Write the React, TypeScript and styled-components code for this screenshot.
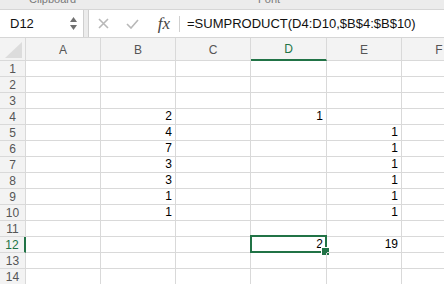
import { FC } from 'react';
import styled, { createGlobalStyle } from 'styled-components';

const GlobalStyle = createGlobalStyle`
    body {
        margin: 0;
        font-family: 'Liberation Sans', Arial, sans-serif;
        background: #ffffff;
        overflow: hidden;
    }
`;

const green = '#217346';
const gridLine = '#d9d9d9';

const Ribbon = styled.div`
    height: 9px;
    background: #ececec;
    display: flex;
    overflow: hidden;
`;

const GroupLabel = styled.span<{ $left: number }>`
    margin-left: ${(p) => p.$left}px;
    margin-top: -8px;
    font-size: 11px;
    line-height: 14px;
    color: #7a7a7a;
`;

const FormulaBar = styled.div`
    height: 27px;
    display: flex;
    background: #ececec;
    border-top: 1px solid #d6d6d6;
    border-bottom: 1px solid #d6d6d6;
`;

const NameBox = styled.div`
    width: 84px;
    background: #ffffff;
    border-right: 1px solid #cfcfcf;
    display: flex;
    align-items: center;
    justify-content: space-between;
    padding: 0 6px 0 10px;
    box-sizing: border-box;
    font-size: 13px;
    color: #111;
`;

const Stepper = styled.div`
    display: flex;
    flex-direction: column;
    gap: 3px;
`;

const FormulaArea = styled.div`
    flex: 1;
    margin-left: 4px;
    background: #ffffff;
    border-left: 1px solid #cfcfcf;
    display: flex;
    align-items: center;
`;

const IconSlot = styled.div<{ $width: number }>`
    width: ${(p) => p.$width}px;
    display: flex;
    justify-content: center;
    align-items: center;
`;

const Fx = styled.span`
    font-family: 'Liberation Serif', 'Times New Roman', serif;
    font-style: italic;
    font-size: 17px;
    color: #444;
    margin-left: 4px;
`;

const Divider = styled.div`
    width: 1px;
    height: 16px;
    background: #d0d0d0;
    margin: 0 7px 0 2px;
`;

const Formula = styled.span`
    font-size: 13px;
    color: #111;
`;

const SheetFrame = styled.div`
    overflow: hidden;
    width: 444px;
`;

const Sheet = styled.div`
    display: grid;
    grid-template-columns: 26px 75px 75px 75px 76px 75px 75px;
    grid-template-rows: 23px;
    grid-auto-rows: 16px;
    width: max-content;
`;

const Corner = styled.div`
    background: #f3f3f3;
    border-right: 1px solid ${gridLine};
    border-bottom: 1px solid ${gridLine};
    box-sizing: border-box;
    display: flex;
    align-items: flex-end;
    justify-content: flex-end;
    padding: 0 3px 2px 0;
`;

const ColHead = styled.div<{ $active?: boolean }>`
    background: #f3f3f3;
    border-right: 1px solid ${gridLine};
    border-bottom: ${(p) => (p.$active ? `2px solid ${green}` : `1px solid ${gridLine}`)};
    box-sizing: border-box;
    display: flex;
    align-items: center;
    justify-content: center;
    font-size: 12px;
    color: ${(p) => (p.$active ? green : '#555')};
    padding-top: 1px;
`;

const RowHead = styled.div<{ $active?: boolean }>`
    background: #f3f3f3;
    border-right: ${(p) => (p.$active ? `2px solid ${green}` : `1px solid ${gridLine}`)};
    border-bottom: 1px solid ${gridLine};
    box-sizing: border-box;
    display: flex;
    align-items: center;
    justify-content: center;
    font-size: 12px;
    color: ${(p) => (p.$active ? green : '#555')};
`;

const Cell = styled.div`
    position: relative;
    border-right: 1px solid ${gridLine};
    border-bottom: 1px solid ${gridLine};
    box-sizing: border-box;
    font-size: 12px;
    line-height: 15px;
    color: #000;
    text-align: right;
    padding-right: 3px;
`;

const Selection = styled.div`
    position: absolute;
    top: -2px;
    left: -1px;
    right: -1px;
    bottom: -1px;
    border: 2px solid ${green};
`;

const FillHandle = styled.div`
    position: absolute;
    right: -5px;
    bottom: -5px;
    width: 7px;
    height: 7px;
    background: ${green};
    border: 1px solid #ffffff;
    box-sizing: content-box;
`;

const columns = ['A', 'B', 'C', 'D', 'E', 'F'];

const data: Record<string, string> = {
    B4: '2',
    B5: '4',
    B6: '7',
    B7: '3',
    B8: '3',
    B9: '1',
    B10: '1',
    D4: '1',
    E5: '1',
    E6: '1',
    E7: '1',
    E8: '1',
    E9: '1',
    E10: '1',
    D12: '2',
    E12: '19',
};

const activeCol = 'D';
const activeRow = 12;

const App: FC = () => {
    const rows = Array.from({ length: 14 }, (_, i) => i + 1);

    return (
        <>
            <GlobalStyle />
            <Ribbon>
                <GroupLabel $left={29}>Clipboard</GroupLabel>
                <GroupLabel $left={182}>Font</GroupLabel>
            </Ribbon>
            <FormulaBar>
                <NameBox>
                    D12
                    <Stepper>
                        <svg width="7" height="5" viewBox="0 0 7 5">
                            <path d="M3.5 0 L7 5 L0 5 Z" fill="#707070" />
                        </svg>
                        <svg width="7" height="5" viewBox="0 0 7 5">
                            <path d="M0 0 L7 0 L3.5 5 Z" fill="#707070" />
                        </svg>
                    </Stepper>
                </NameBox>
                <FormulaArea>
                    <IconSlot $width={29}>
                        <svg width="11" height="11" viewBox="0 0 11 11">
                            <path d="M1 1 L10 10 M10 1 L1 10" stroke="#b8b8b8" strokeWidth="1.6" />
                        </svg>
                    </IconSlot>
                    <IconSlot $width={29}>
                        <svg width="13" height="10" viewBox="0 0 13 10">
                            <path d="M1 5 L5 9 L12 1" stroke="#b8b8b8" strokeWidth="1.6" fill="none" />
                        </svg>
                    </IconSlot>
                    <IconSlot $width={30}>
                        <Fx>fx</Fx>
                    </IconSlot>
                    <Divider />
                    <Formula>=SUMPRODUCT(D4:D10,$B$4:$B$10)</Formula>
                </FormulaArea>
            </FormulaBar>
            <SheetFrame>
                <Sheet>
                    <Corner>
                        <svg width="17" height="16" viewBox="0 0 17 16">
                            <path d="M17 0 L17 16 L0 16 Z" fill="#dcdcdc" />
                        </svg>
                    </Corner>
                    {columns.map((c) => (
                        <ColHead key={c} $active={c === activeCol}>
                            {c}
                        </ColHead>
                    ))}
                    {rows.map((r) => (
                        <Row key={r} row={r} />
                    ))}
                </Sheet>
            </SheetFrame>
        </>
    );
};

const Row: FC<{ row: number }> = ({ row }) => (
    <>
        <RowHead $active={row === activeRow}>{row}</RowHead>
        {columns.map((c) => {
            const id = `${c}${row}`;
            const selected = c === activeCol && row === activeRow;
            return (
                <Cell key={id}>
                    {data[id]}
                    {selected && (
                        <Selection>
                            <FillHandle />
                        </Selection>
                    )}
                </Cell>
            );
        })}
    </>
);

export default App;
